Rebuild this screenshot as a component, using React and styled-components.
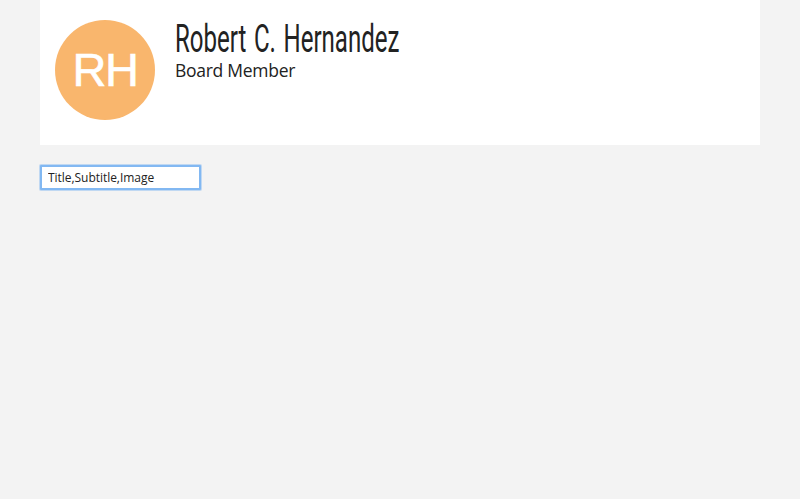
import React from "react";
import styled, { createGlobalStyle } from "styled-components";

const GlobalStyle = createGlobalStyle`
  *, *::before, *::after { box-sizing: border-box; }
  body { margin: 0; background: #f3f3f3; color: #222; font-family: "Open Sans", sans-serif; }
`;

const Page = styled.main`
  width: 720px;
  min-height: 100vh;
  margin: 0 auto;
`;

const ProfileCard = styled.header`
  display: flex;
  gap: 20px;
  height: 145px;
  padding: 20px 15px;
  background: #fff;
`;

const Avatar = styled.div`
  display: flex;
  align-items: center;
  justify-content: center;
  flex: none;
  width: 100px;
  height: 100px;
  border-radius: 50%;
  background: #f9b66d;
  color: #fff;
  font: 47px/100px "Liberation Sans", sans-serif;
  letter-spacing: -1.5px;
  -webkit-text-stroke: 0.6px #fff;
`;

const Details = styled.div`
  width: 400px;
`;

const Name = styled.h1`
  width: max-content;
  height: 38px;
  margin: 0;
  transform: scaleX(0.633);
  transform-origin: 0 50%;
  font: 400 38px/38px Roboto, sans-serif;
  word-spacing: 2.5px;
  white-space: nowrap;
`;

const Role = styled.p`
  margin: 0;
  font-size: 17.5px;
  line-height: 25px;
  letter-spacing: -0.28px;
`;

const Field = styled.input`
  display: block;
  width: 161px;
  height: 25px;
  margin-top: 20px;
  padding: 0 6px;
  border: 2px solid #82b8f2;
  border-radius: 1px;
  outline: none;
  box-shadow: 0 0 0 1px rgba(130, 184, 242, 0.45);
  background: #fff;
  color: #222;
  font: 12px "Open Sans", sans-serif;
  letter-spacing: -0.04px;
`;

export default function App() {
  return (
    <>
      <GlobalStyle />
      <Page>
        <ProfileCard>
          <Avatar>RH</Avatar>
          <Details>
            <Name>Robert C. Hernandez</Name>
            <Role>Board Member</Role>
          </Details>
        </ProfileCard>
        <Field aria-label="Fields" defaultValue="Title,Subtitle,Image" />
      </Page>
    </>
  );
}
